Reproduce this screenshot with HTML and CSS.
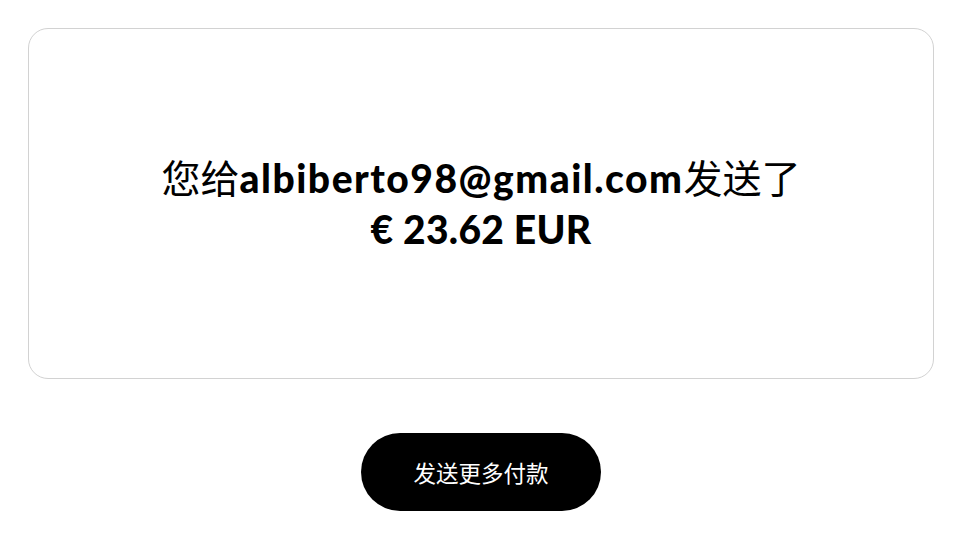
FILE: index.html
```html
<!DOCTYPE html>
<html lang="zh-CN">
<head>
  <meta charset="UTF-8" />
  <meta name="viewport" content="width=device-width, initial-scale=1.0" />
  <title>付款已发送</title>
  <link rel="stylesheet" href="styles.css">
</head>
<body>
  <div class="page">
    <section class="card">
      <h1 class="message">
        您给<strong class="email">albiberto98@gmail.com</strong>发送了<br>
        <strong class="amount">€ 23.62 EUR</strong>
      </h1>
    </section>
    <div class="actions">
      <button class="send-more">发送更多付款</button>
    </div>
  </div>
</body>
</html>
```

FILE: styles.css
```css
body {
  margin: 0;
  background: #fff;
  color: #000;
  font-family: "Lato", "Noto Sans CJK SC", sans-serif;
}

.page {
  width: 962px;
  padding: 28px 28px 0;
  box-sizing: border-box;
}

.card {
  height: 351px;
  border: 1px solid #d2d2d2;
  border-radius: 20px;
  box-sizing: border-box;
  display: flex;
  align-items: center;
  justify-content: center;
}

.message {
  margin: 0;
  font-size: 39px;
  font-weight: 400;
  line-height: 51px;
  text-align: center;
}

.message strong {
  font-weight: 900;
}

.email {
  letter-spacing: 1.5px;
}

.amount {
  letter-spacing: 0.3px;
}

.actions {
  display: flex;
  justify-content: center;
  margin-top: 54px;
}

.send-more {
  width: 240px;
  height: 78px;
  border: none;
  border-radius: 39px;
  background: #000;
  color: #fff;
  font-family: "Noto Sans CJK SC", sans-serif;
  font-size: 22.5px;
  cursor: pointer;
}
```
